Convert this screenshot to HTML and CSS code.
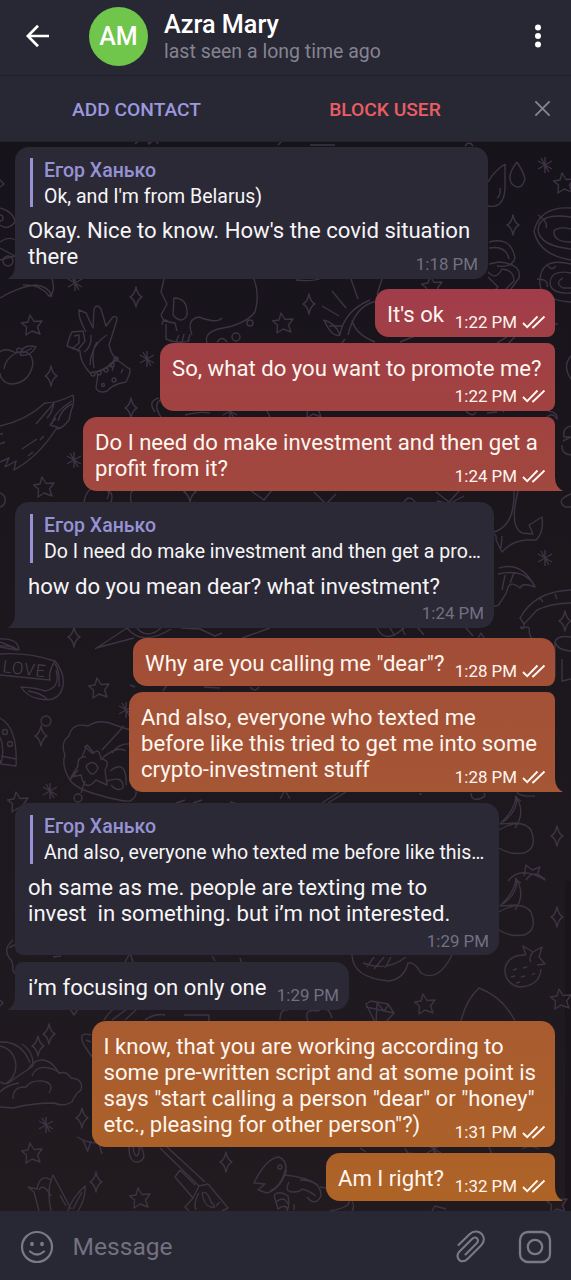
FILE: index.html
```html
<!DOCTYPE html>
<html lang="en">
<head>
<meta charset="utf-8">
<title>Azra Mary</title>
<link rel="stylesheet" href="styles.css">
</head>
<body>
<svg class="defs" width="0" height="0" aria-hidden="true">
  <symbol id="checks" viewBox="0 0 24 14"><path d="M1 8l4.2 4.2L15.500 1.500M10.300 11.800l.8.600L22.500 1.500" fill="none" stroke="currentColor" stroke-width="1.900"/></symbol>
</svg>
<div class="app">
  <header class="topbar">
    <svg class="back" viewBox="0 0 24 24"><path d="M23 12H2M12 1.800L1.800 12 12 22.200" fill="none" stroke="#fff" stroke-width="2.700"/></svg>
    <div class="avatar">AM</div>
    <div class="who"><div class="name">Azra Mary</div><div class="status">last seen a long time ago</div></div>
    <svg class="more" viewBox="0 0 8 24"><g fill="#fff"><circle cx="4" cy="3.500" r="3"/><circle cx="4" cy="12" r="3"/><circle cx="4" cy="20.500" r="3"/></g></svg>
  </header>
  <nav class="actions">
    <div class="add">ADD CONTACT</div>
    <div class="block">BLOCK USER</div>
    <svg class="close" viewBox="0 0 18 18"><path d="M1.500 1.500l15 15M16.500 1.500l-15 15" stroke="#858390" stroke-width="2" fill="none"/></svg>
  </nav>
  <main class="chat">
    <svg class="wallpaper" viewBox="0 142 571 1069" aria-hidden="true">
      <defs>
        <path id="sp" d="M0-10Q1.500-2 6 0Q1.500 2 0 10Q-1.500 2-6 0Q-1.500-2 0-10z"/>
        <path id="st" d="M-2-10L2-3.500 10-4 5.500 2 8 9 0 6-6 10-5.500 2-10.500-2-4-3z"/>
        <path id="as" d="M0-8V8M-7-4L7 4M-7 4L7-4M-4-7L4 7"/>
      </defs>
      <path d="M565 881h6v330h-6z" fill="#19151a" stroke="none"/>
      <use href="#sp" x="136" y="297"/><use href="#sp" x="51" y="376"/><use href="#sp" x="131" y="408"/><use href="#sp" x="513" y="225"/><use href="#sp" x="309" y="304"/><use href="#sp" x="74" y="637"/><use href="#sp" x="41" y="736"/><use href="#sp" x="565" y="621"/><use href="#sp" x="557" y="836"/><use href="#sp" x="557" y="917"/><use href="#sp" x="38" y="1046"/><use href="#sp" x="49" y="1034"/><use href="#sp" x="82" y="1118"/><use href="#sp" x="96" y="1182"/><use href="#sp" x="226" y="1162"/><use href="#sp" x="190" y="492"/>
      <use href="#st" x="32" y="325"/><use href="#st" x="283" y="323"/><use href="#st" x="564" y="183"/><use href="#st" x="432" y="286"/><use href="#st" x="44" y="487"/><use href="#st" x="99" y="688"/><use href="#st" x="18" y="802"/><use href="#st" x="425" y="1004"/><use href="#st" x="561" y="999"/><use href="#st" x="32" y="1153"/><use href="#st" x="140" y="1198"/><use href="#st" x="557" y="1203"/><use href="#st" x="313" y="408"/>
      <use href="#as" x="75" y="283"/><use href="#as" x="147" y="359"/><use href="#as" x="74" y="460"/><use href="#as" x="545" y="165"/><use href="#as" x="545" y="558"/><use href="#as" x="50" y="791"/><use href="#as" x="126" y="710"/><use href="#as" x="46" y="1125"/><use href="#as" x="434" y="1149"/><use href="#as" x="230" y="411"/>
      <!-- eye and flourish on the left margin -->
      <path d="M0 208Q14 212 15 222Q8 231 0 225M0 242Q9 236 15 240M0 260l15-4M0 248l15 8M0 180l4 4-4 3M0 298Q18 287 35 285Q48 286 52 296L49 296Q40 284 23 285M52 279Q56 292 49 296"/>
      <circle cx="0" cy="218" r="3"/><circle cx="8" cy="261" r="5"/>
      <path d="M135 144q10-10 14 0q6-6 9 0M278 145l5-5M465 146q4-6 8 0M310 145h25"/>
      <!-- hand -->
      <path d="M86 332Q78 318 79 310L86 313 93 328 94 309Q97 303 101 309L106 326 113 317Q119 315 116 323L109 345Q112 357 117 359Q106 372 90 373Q80 362 80 351L67 346Q70 335 72 332L83 331 85 341 77 351M74 336l5-1v8l-7 6M91 335Q92 347 84 352M107 335Q91 345 90 365M97 342Q91 350 94 368M90 373Q109 370 116 357M98 374L96 388Q99 394 107 391Q113 384 126 382Q133 368 128 368L116 359M109 365q6 2 3 6M123 369l-2 4"/>
      <g><circle cx="93" cy="374" r="2"/><circle cx="99" cy="373" r="2"/><circle cx="106" cy="370" r="2"/><circle cx="112" cy="365" r="2"/><circle cx="116" cy="359" r="2"/><circle cx="103" cy="385" r="1.500"/><circle cx="114" cy="380" r="2"/></g>
      <!-- face and skull -->
      <path d="M164 279L161 292 167 304 161 315 164 321 175 323 177 331M170 323Q163 316 162 325M166 324V339Q181 345 190 340M174 298Q188 298 187 315Q182 325 173 315zM192 335Q186 319 199 317Q217 324 222 318M254 279Q260 295 255 312Q245 325 218 329Q202 334 208 345M176 342l3-7M182 342l2-8M188 342l2-8M217 342q5-7 10 0"/>
      <circle cx="250" cy="323" r="3"/><circle cx="236" cy="337" r="4"/>
      <!-- peach -->
      <path d="M0 352Q5 347 16 353Q32 348 33 364Q29 384 10 384Q0 381 0 373M16 353Q5 359 4 369M17 353Q16 345 23 350M20 355Q23 343 36 347Q30 357 20 355M23 353l9-5"/>
      <!-- wing -->
      <path d="M0 426Q27 420 45 403Q58 403 73 395Q75 403 71 411L69 420Q61 430 56 429Q39 456 14 470L16 461 5 467 9 458 0 462M36 424L54 403Q52 413 47 418M52 424Q54 412 72 401M58 421Q62 408 72 404M60 428l-10-3 6-7M22 449l15-10M28 456l5-4M3 434H0M0 444l5-2M40 440l4-4"/>
      <path d="M0 493Q6 495 5 502Q4 506 0 507M84 502Q87 484 103 487Q112 491 107 499M108 491Q114 493 111 502M131 502Q129 489 136 490M155 412Q147 401 159 398M161 417Q153 405 160 400M185 415q15-4 25-2M260 411q7-5 10 7M250 490l14 10 8-10"/>
      <!-- sun -->
      <path d="M351 279l7 20M332 291l14 17M322 306l17 10M324 320q8 18 16 15Q344 311 370 300M323 320Q335 322 340 335M348 335Q355 305 377 301M352 320Q355 334 375 342M382 279q-3 9-5 16M329 326h13M345 339l-7 9M400 342l15-6M296 280q18 2 25-2"/>
      <!-- drops, donuts and heart -->
      <path d="M505 164Q494 171 488 182M505 164V188Q504 209 488 206M500 188q1 7-3 10M517 162Q506 176 512 184Q521 192 525 179Q524 173 517 162M571 208Q540 206 534 231Q539 255 571 260M571 217Q538 212 538 231Q541 246 571 249M571 229Q559 226 554 231Q553 242 571 242M571 264Q538 256 540 285Q542 300 571 302M571 273Q550 269 550 284Q552 294 571 293M563 278q-9 5 0 10h8M547 264q4 8 9 2M537 279q12 0 10 8M538 215q10 6 8 13"/>
      <path d="M489 242Q511 236 515 258Q512 268 497 266M489 248Q506 245 509 259M489 264l10-2Q522 264 519 278L508 293M488 272q8 9 14-3Q514 270 514 281L502 293M488 277l10 10-8 8M550 324h8"/>
      <!-- anchor and feather -->
      <path d="M497 343l24-15M508 344l16-17M466 411q7 7 10 1M487 413l10-1M491 402l13 10M548 411q10 1 9 8Q552 411 546 418M571 356Q562 366 571 379M571 426q-9 2-7 11h7M563 441l8-4M562 445q-1 9 9 10M314 492l12 12 10-10M404 502q5-8 11 0M436 492l13 10 11-12M437 501l12 3 15-8M571 494Q555 500 565 507h6"/>
      <path d="M514 491Q515 526 494 532M518 491Q509 527 522 533L533 534 529 525 542 517Q544 533 536 540L526 540Q512 541 502 552L496 540Q497 534 493 534M502 536l-1 12M499 568Q522 561 535 587Q522 582 520 588Q509 579 507 591Q505 596 499 604M498 574Q524 568 535 586M505 575l-3 15M514 573l-4 10M500 604q-4 3-7 2M571 590Q535 591 520 618L524 624 537 610Q552 603 571 603M555 594l2 5M540 598l3 4M524 623v5l-4-1M521 629q10-5 8 3l3 8M571 637Q557 635 555 642Q557 650 571 651M555 642v35M562 659v22l9-2"/>
      <!-- heart and ribbon fragments below the quoted bubble -->
      <path d="M377 628q8 17 27 0M390 628l5 8M402 628l3 7M418 628l6 7M466 628l7 8M478 638l3-5 3 5M95 649L127 628M96 648l38-10M127 628q15 19 44 1M137 628q10 12 24 0M181 628l19 1 15 7 7-3M242 638l28-10M130 685l5 2M163 691l4-6M204 687l16 1M250 687q5 6 9 0"/>
      <!-- ribbon banner -->
      <path d="M0 639Q18 638 19 650Q9 645 0 646M0 642l15 6M0 654Q27 652 55 661Q65 673 63 686Q59 703 40 699Q27 697 21 687Q38 688 45 691Q61 688 56 670M55 661Q48 672 50 680L0 675M28 691q13 2 19 8M59 687q1-17-4-23M17 650l-17-3"/>
      <text x="2" y="672" transform="rotate(7 2 672)" class="ribbon-text">LOVE</text>
      <!-- horseshoe and head -->
      <path d="M0 718Q18 728 16 766L1 764Q5 748 0 737M1 764l-1-4M16 759l-15-3"/>
      <circle cx="5" cy="732" r="2.500"/><circle cx="10" cy="744" r="2.500"/><circle cx="46" cy="721" r="5"/>
      <path d="M130 730L115 725Q100 718 88 726Q72 722 69 736Q60 742 65 755Q61 766 70 780Q76 789 99 795Q123 802 130 801Q140 796 134 784M102 750l22-24M70 780l8-10M84 746l9 8M82 757l5-12 7 8Q99 747 101 759Q111 760 105 770L107 785 96 780Q85 793 81 775L71 777 78 766Q77 756 86 757M86 766q8-8 12 2q-6 13-12-2M101 759q16-14 25-8M107 781Q124 775 123 788Q117 792 111 785M110 771Q127 758 126 785M112 753q7-10 18-9M81 793l4-12"/>
      <circle cx="78" cy="798" r="4"/><path d="M176 803l9-3M193 803l9-3M230 802l8 2M280 799l5-9 5 9"/>
      <!-- cherries -->
      <g id="cherry"><path d="M499 830Q521 817 531 830Q538 848 524 853Q509 855 499 848M500 824Q515 810 516 796Q526 813 515 828M503 822Q517 812 517 798M500 824l17-1M515 797l6 4"/></g>
      <use href="#cherry" y="82"/><path d="M471 793q0 8 8 6t5-6M419 794h3M535 796q-16 1-18-4M322 803l17-11M328 803l18-11M508 881Q520 865 545 880Q534 868 526 880M524 876l2-11 6 5 8-3-3 8 8 4"/>
      <!-- strawberry, diamond and fruit -->
      <path d="M526 955Q509 954 505 968Q504 983 519 987Q540 986 541 969M526 955L523 946 533 952 542 947 539 957 545 964 537 965M533 952q-5 6-2 10M513 970l4-1M523 968l4-1M511 977l4-1M521 977l4-1M516 983l4-1M532 975l3-2M352 955Q353 978 389 981Q404 979 408 963Q414 961 421 973Q438 983 452 955M367 967l7-10M374 969l10-12M385 968l6-11M363 963Q387 972 406 957M366 1004L371 1001 388 1004 394 1013 384 1024 376 1024zM366 1007l28 6M376 1024l1-21 7 8 5-7M461 1021Q466 1000 479 988Q503 997 515 1021M299 1010q6-9 14 0M308 1021q-5-13 10-10q10-7 14 7M0 1000l3 3-3 3"/>
      <path d="M13 940Q2 949 10 959Q13 960 13 971L18 977M9 948q9-7 11 2M31 955q2-7 9-5M53 957l8-1M125 962l5-9 3 9M212 956l3 5M240 958l2 6M70 1009l4 6 4-6M104 1020q9-15 18-11M112 1020l15-11M125 1020l12-11M145 1020q10-7 20-5M184 1015h25v6M280 1020q0-12 8-10M91 1035q-14-4-7 10l8 12M91 1042l-5-2"/>
      <!-- moon and clouds -->
      <path d="M0 1042Q22 1041 30 1063M0 1046Q14 1049 16 1065Q16 1078 5 1084L0 1082M22 1044Q34 1052 33 1066Q21 1074 7 1084M28 1070Q35 1057 47 1061Q53 1063 59 1073Q67 1071 71 1078Q84 1079 81 1090Q75 1094 72 1102Q63 1107 54 1103Q33 1103 13 1108L0 1107M13 1099Q13 1086 26 1087Q31 1080 42 1081Q55 1083 49 1093M32 1076Q36 1065 49 1068Q58 1070 60 1074M0 1092Q6 1085 19 1083"/>
      <!-- branch, tulip -->
      <path d="M77 1137Q91 1145 101 1142M83 1140l5 12M91 1141l-3 9M99 1143l3 11M39 1211L34 1192 28 1187 37 1189Q40 1173 51 1180L53 1175 71 1209M39 1190Q43 1182 51 1196M51 1180Q47 1193 51 1211M60 1195l6 11M68 1211Q71 1199 85 1186Q86 1198 78 1211M73 1209l9-17"/>
      <!-- revolver, ring and hand -->
      <path d="M129 1147q0 16 9 15q10-3 3-15M133 1147q1 9 4 9q3-3 2-9M160 1148L199 1186 208 1184 228 1208 222 1211M167 1147L205 1182M180 1170L175 1177 193 1198 199 1186M180 1170l15 15M193 1198L185 1207 189 1211M199 1193Q193 1203 196 1210M202 1193Q207 1190 211 1202Q218 1209 211 1207Q204 1206 202 1193M216 1206l4-4"/>
      <path d="M254 1183Q266 1158 279 1157Q287 1160 286 1172Q280 1189 267 1193L258 1190 265 1184zM286 1168Q281 1187 270 1191M285 1175Q306 1177 318 1185M289 1182Q282 1195 300 1191Q302 1186 316 1196M274 1195Q280 1190 288 1196Q290 1205 287 1211M274 1195l2 7q8-7 12 2M276 1202l2 7q7-6 10 1M294 1204v6M300 1180Q321 1180 321 1196Q315 1207 307 1197M320 1187q10 0 13 10M330 1211q21-4 19-10M360 1148l6 4M405 1148q2 7 7 5M489 1147l3 7M522 1149q8-5 17 0M352 1201q3 5 0 10M432 1211l3-5 11 3"/>
      <circle cx="280" cy="1167" r="2"/>
    </svg>

    <section class="bubble in b1 tail">
      <div class="reply"><b>Егор Ханько</b><span>Ok, and I'm from Belarus)</span></div>
      <p>Okay. Nice to know. How's the covid situation<br>there</p>
      <div class="meta">1:18 PM</div>
    </section>
    <section class="bubble out b2"><p>It's ok</p><div class="meta">1:22 PM<svg><use href="#checks"/></svg></div></section>
    <section class="bubble out b3 stacked"><p>So, what do you want to promote me?</p><div class="meta">1:22 PM<svg><use href="#checks"/></svg></div></section>
    <section class="bubble out b4 tail"><p>Do I need do make investment and then get a<br>profit from it?</p><div class="meta">1:24 PM<svg><use href="#checks"/></svg></div></section>
    <section class="bubble in b5 stacked tail">
      <div class="reply"><b>Егор Ханько</b><span>Do I need do make investment and then get a pro…</span></div>
      <p>how do you mean dear? what investment?</p>
      <div class="meta">1:24 PM</div>
    </section>
    <section class="bubble out b6"><p>Why are you calling me "dear"?</p><div class="meta">1:28 PM<svg><use href="#checks"/></svg></div></section>
    <section class="bubble out b7 tail"><p>And also, everyone who texted me<br>before like this tried to get me into some<br>crypto-investment stuff</p><div class="meta">1:28 PM<svg><use href="#checks"/></svg></div></section>
    <section class="bubble in b8 stacked">
      <div class="reply"><b>Егор Ханько</b><span>And also, everyone who texted me before like this…</span></div>
      <p>oh same as me. people are texting me to<br>invest&nbsp; in something. but i’m not interested.</p>
      <div class="meta">1:29 PM</div>
    </section>
    <section class="bubble in b9 tail"><p>i’m focusing on only one</p><div class="meta">1:29 PM</div></section>
    <section class="bubble out b10"><p>I know, that you are working according to<br>some pre-written script and at some point is<br>says "start calling a person "dear" or "honey"<br>etc., pleasing for other person"?)</p><div class="meta">1:31 PM<svg><use href="#checks"/></svg></div></section>
    <section class="bubble out b11 tail"><p>Am I right?</p><div class="meta">1:32 PM<svg><use href="#checks"/></svg></div></section>
  </main>
  <footer class="composer">
    <svg class="smile" viewBox="0 0 34 34" fill="none" stroke="#7c7987" stroke-width="2.200"><circle cx="17" cy="17" r="15"/><path d="M10 21.500q7 6 14 0" stroke-linecap="round"/><g fill="#7c7987" stroke="none"><ellipse cx="12" cy="14" rx="1.900" ry="2.300"/><ellipse cx="22" cy="14" rx="1.900" ry="2.300"/></g></svg>
    <div class="placeholder">Message</div>
    <svg class="clip" viewBox="0 0 30 34" fill="none" stroke="#7c7987" stroke-width="2.100" stroke-linecap="round"><path d="M2.500 15L13.500 4.200C18 0 24 1 26.500 5C28.500 8.500 28 12.500 25 15.500L11.500 29C8.500 32 4 32 2.500 29C1 26.500 1.500 23.500 3.500 21.500L16 9C18 7 20.500 7 21.500 9C22.500 10.700 22 12 20.500 13.500L9.500 24.500"/></svg>
    <svg class="camera" viewBox="0 0 34 34" fill="none" stroke="#7c7987" stroke-width="2.300"><rect x="2" y="2" width="30" height="30" rx="8"/><circle cx="17" cy="17" r="7.200"/></svg>
  </footer>
</div>
</body>
</html>
```
FILE: styles.css
```css
* { box-sizing: border-box; }
body { margin: 0; font-family: Roboto, "Noto Sans", sans-serif; background: #1b171c; }
.defs { position: absolute; }
.app { width: 571px; height: 1280px; display: flex; flex-direction: column; overflow: hidden; }
.topbar { height: 76px; flex: none; display: flex; align-items: flex-start; background: #282734; color: #fff; border-bottom: 1px solid #201f2a; }
.back { width: 24px; height: 24px; margin: 24px 0 0 26px; }
.avatar { width: 59px; height: 59px; margin: 7px 0 0 39px; border-radius: 50%; background: #70c54b; font-weight: 500; font-size: 25px; line-height: 60px; text-align: center; }
.who { margin: 10px 0 0 16px; flex: 1; white-space: nowrap; }
.name { font-size: 25.200px; line-height: 29px; font-weight: 500; }
.status { font-size: 19.500px; line-height: 25px; color: #858390; }
.more { width: 8px; height: 24px; margin: 24px 29px 0 0; }
.actions { height: 66px; flex: none; display: grid; grid-template-columns: 273px 224px 74px; align-items: center; justify-items: center; background: #282734; font-weight: 500; font-size: 19.200px; border-bottom: 1px solid #23222d; padding-top: 2px; }
.add { color: #9b98df; }
.block { color: #ea5d65; }
.close { width: 17px; height: 17px; margin: 0 0 2px 17px; }
.chat { flex: 1; min-height: 0; position: relative; display: flex; flex-direction: column; padding: 4.500px 16px 0 15px; background: linear-gradient(#17131a, #1b171d 45%, #211b20); }
.wallpaper { position: absolute; left: 0; top: 0; width: 571px; height: 1069px; fill: none; stroke: #3d3443; stroke-width: 1.400; stroke-linejoin: round; }
.ribbon-text { font: 300 17px Roboto, sans-serif; fill: #4a4050; stroke: none; letter-spacing: 1px; }
.bubble { position: relative; flex: none; display: flex; flex-direction: column; border-radius: 14px; padding: 11.600px 12px 5px; color: #f7f5f7; }
.bubble p { margin: 0 0 .900px; font-size: 22.130px; line-height: 26px; white-space: nowrap; }
.in { align-self: flex-start; background: #2a2935; padding-left: 13px; border-radius: 8px 14px 14px 8px; }
.out { align-self: flex-end; border-radius: 14px 8px 8px 14px; color: #fff6f0; }
.out, .out.tail::after { background: linear-gradient(#a13d4a 0, #a13d4a 290px, #a14340 420px, #a1483f 490px, #a24d37 640px, #a55635 790px, #a85b30 1020px, #ae6326 1200px) fixed; }
.meta { align-self: flex-end; height: 20px; margin-top: -15.500px; display: flex; align-items: center; gap: 5px; font-size: 16.900px; line-height: 20px; }
.meta svg { width: 24px; height: 14px; }
.stacked .meta { margin-top: 4.500px; }
.in .meta { color: #737080; margin-right: -2px; }
.b1 .meta, .b5 .meta { padding-bottom: 1.500px; }
.out .meta { margin-right: -3px; }
.reply { display: flex; flex-direction: column; height: 49px; margin: 0 0 10px 2px; padding-left: 11px; border-left: 3px solid #9692d3; line-height: 26px; white-space: nowrap; }
.reply b { font-size: 19.500px; font-weight: 500; color: #9692d3; margin-top: -.500px; }
.reply span { font-size: 19.530px; }
.out.tail { border-bottom-right-radius: 0; }
.in.tail { border-bottom-left-radius: 0; }
.tail::after { content: ""; position: absolute; bottom: 0; width: 9px; height: 14px; }
.out.tail::after { right: -8px; clip-path: path("M0 0H1Q1 10 9 14H0z"); }
.in.tail::after { left: -8px; background: #2a2935; clip-path: path("M9 0H8Q8 10 0 14H9z"); }
.b1 { width: 473px; height: 132.500px; border-top-left-radius: 14px; }
.b2 { width: 180px; height: 48px; margin-top: 10px; border-top-right-radius: 14px; }
.b3 { width: 395px; height: 68px; margin-top: 6px; }
.b4 { width: 472px; height: 74px; margin-top: 6px; }
.b5 { width: 479px; height: 126px; margin-top: 11px; border-top-left-radius: 14px; }
.b6 { width: 422px; height: 48px; margin-top: 10px; border-top-right-radius: 14px; }
.b7 { width: 426px; height: 100px; margin-top: 6px; }
.b8 { width: 484px; height: 152px; margin-top: 11px; border-top-left-radius: 14px; }
.b9 { width: 334px; height: 48px; margin-top: 7px; }
.b10 { width: 463.500px; height: 126px; margin-top: 11px; border-top-right-radius: 14px; }
.b11 { width: 229px; height: 48px; margin-top: 6px; }
.composer { height: 69px; flex: none; display: flex; align-items: center; background: #282734; padding: 2px 19px 0 20px; }
.smile { width: 34px; height: 34px; }
.placeholder { flex: 1; margin-left: 18.500px; font-size: 24.600px; color: #737080; }
.clip { width: 30px; height: 34px; margin-right: 32px; }
.camera { width: 34px; height: 34px; }
```
